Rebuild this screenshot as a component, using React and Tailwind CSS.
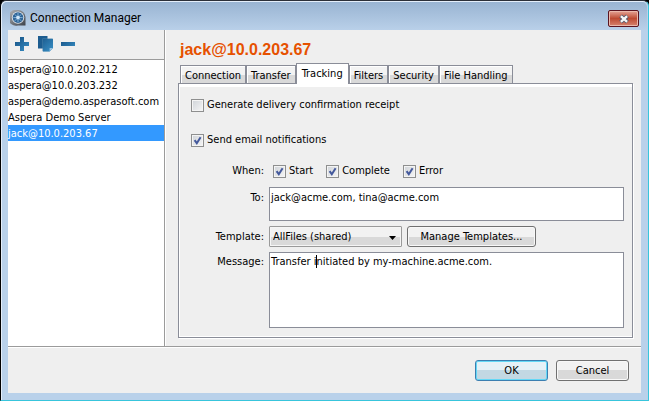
import { useState } from "react";

const connections = [
  "aspera@10.0.202.212",
  "aspera@10.0.203.232",
  "aspera@demo.asperasoft.com",
  "Aspera Demo Server",
  "jack@10.0.203.67",
];

const tabs = ["Connection", "Transfer", "Tracking", "Filters", "Security", "File Handling"];

function Check({ label, defaultChecked }) {
  const [checked, setChecked] = useState(Boolean(defaultChecked));

  return (
    <label className="flex items-center gap-[3px] whitespace-nowrap">
      <span className="grid">
        <input
          type="checkbox"
          checked={checked}
          onChange={(e) => setChecked(e.target.checked)}
          className="col-start-1 row-start-1 size-[13px] appearance-none border border-[#8e8f8f] bg-linear-to-br from-[#cfd3d8] to-[#f6f6f6] shadow-[inset_0_0_0_1px_#f4f4f4]"
        />
        {checked && (
          <svg viewBox="0 0 13 13" className="pointer-events-none col-start-1 row-start-1 size-[13px]">
            <path d="M3.6 6.2 L5.8 9.2 L9.6 3.2" fill="none" stroke="#44599c" strokeWidth="2" />
          </svg>
        )}
      </span>
      {label}
    </label>
  );
}

function AppIcon() {
  return (
    <svg viewBox="0 0 16 16" className="size-4">
      <defs>
        <linearGradient id="rim" x1="0" y1="0" x2="1" y2="1">
          <stop offset="0" stopColor="#b5b8bd" />
          <stop offset="1" stopColor="#3b4048" />
        </linearGradient>
      </defs>
      <path d="M8 0 A8 8 0 1 0 8 15.5 L15.5 15.5 L15.5 7 A7.5 7.5 0 0 0 8 0Z" fill="url(#rim)" />
      <circle cx="8" cy="7.6" r="6.2" fill="#dde3ea" />
      <circle cx="8" cy="7.6" r="5.3" fill="#2d6396" />
      <path d="M8 3v9.2M3.4 7.6h9.2M4.8 4.4l6.4 6.4M11.2 4.4l-6.4 6.4" stroke="#8dbbe0" strokeWidth="0.9" />
      <circle cx="8" cy="7.6" r="1.8" fill="#cfe5f7" />
    </svg>
  );
}

function ToolbarIcons() {
  return (
    <div className="flex h-[30px] shrink-0 items-start gap-[7px] border-b border-[#9b9b9b] bg-[#efefef] pt-[6px] pl-[6px]">
      <svg width="0" height="0" className="absolute">
        <linearGradient id="steel" gradientUnits="userSpaceOnUse" x1="0" y1="0" x2="16" y2="16">
          <stop offset="0.2" stopColor="#1b5a8d" />
          <stop offset="1" stopColor="#3b93c9" />
        </linearGradient>
      </svg>
      <button aria-label="Add">
        <svg viewBox="0 0 16 16" className="size-4">
          <path d="M6 1h4v5h5v4h-5v5H6v-5H1V6h5z" fill="url(#steel)" />
        </svg>
      </button>
      <button aria-label="Duplicate">
        <svg viewBox="0 0 16 16" className="size-4">
          <path d="M1 0h9.5v12.5H1z" fill="#1c5c8f" />
          <path d="M5.5 2.5H15.7v9.5l-3 3.3H5.5z" fill="#4f86ad" />
          <path d="M6 3H16v9L12.6 15.5H6z" fill="url(#steel)" />
          <path d="M16 12h-3.4v3.5z" fill="#9cc5e3" />
        </svg>
      </button>
      <button aria-label="Remove">
        <svg viewBox="0 0 16 16" className="size-4">
          <path d="M1 6h14v4H1z" fill="url(#steel)" />
        </svg>
      </button>
    </div>
  );
}

export default function App() {
  const [selected, setSelected] = useState("jack@10.0.203.67");
  const [tab, setTab] = useState("Tracking");

  return (
    <div className="min-h-screen bg-black font-['DejaVu_Sans_Condensed','DejaVu_Sans',sans-serif] text-[11px] leading-4 text-black">
      <div className="flex min-h-screen flex-col overflow-hidden rounded-t-[6px] border border-t-[#2b2f38] border-r-[#38c5dc] border-b-[#38c5dc] border-l-black bg-[#b9d1ea] px-[7px] pb-[7px] shadow-[inset_1px_1px_0_#e4eefa]">
        {/* Title bar */}
        <header className="-mx-[6px] mt-px flex h-7 shrink-0 items-start justify-between rounded-t-[5px] bg-linear-to-b from-[#99b4d2] to-[#b9d0e9] pr-2 pl-[8px]">
          <h1 className="flex h-8 items-center gap-1 font-[Roboto,sans-serif] text-[12px]">
            <AppIcon />
            Connection Manager
          </h1>
          <button
            aria-label="Close"
            className="mt-2 flex h-[17px] w-[31px] items-center justify-center rounded-[2px] border border-[#5a1420] bg-linear-to-b from-[#e3a496] from-0% via-[#bd4a32] via-50% to-[#d5826e] shadow-[inset_0_0_0_1px_#eab8ab]"
          >
            <svg viewBox="0 0 12 10" className="h-[10px] w-3">
              <path d="M2.6 2 L9.4 8 M9.4 2 L2.6 8" stroke="#53586b" strokeWidth="4.2" />
              <path d="M2.9 2.2 L9.1 7.8 M9.1 2.2 L2.9 7.8" stroke="#f6f6f6" strokeWidth="2.4" />
            </svg>
          </button>
        </header>

        <div className="flex grow flex-col bg-[#efefef]">
          <div className="flex grow border-b border-[#9b9b9b]">
            {/* Connection list */}
            <aside className="flex w-[157px] shrink-0 flex-col border-r border-[#9b9b9b] bg-white">
              <ToolbarIcons />
              <ul className="pt-px">
                {connections.map((name) => (
                  <li key={name}>
                    <button
                      onClick={() => setSelected(name)}
                      className={
                        name === selected
                          ? "block h-4 w-full bg-[#3399ff] pt-[2px] text-left leading-[14px] whitespace-nowrap text-white"
                          : "block h-4 w-full pt-[2px] text-left leading-[14px] whitespace-nowrap"
                      }
                    >
                      {name}
                    </button>
                  </li>
                ))}
              </ul>
            </aside>

            <main className="flex min-w-0 grow flex-col border-l border-white pt-[10px] pr-2 pb-2 pl-3">
              <h2 className="pb-[2px] pl-[2px] font-['Liberation_Sans',sans-serif] text-[16px] leading-[20px] font-bold text-[#e65100]">
                jack@10.0.203.67
              </h2>

              {/* Tabs */}
              <div role="tablist" className="z-10 -mb-px flex h-[22px] items-end pl-[2px]">
                {tabs.map((name) => (
                  <button
                    key={name}
                    role="tab"
                    aria-selected={name === tab}
                    onClick={() => setTab(name)}
                    className={
                      name === tab
                        ? "h-[21px] border border-b-0 border-[#8a8d98] bg-white px-[5px] pb-px whitespace-nowrap"
                        : "h-[19px] border border-[#8a8d98] bg-linear-to-b from-[#f3f3f3] from-50% to-[#d9d9d9] to-50% px-1 pt-[2px] leading-[14px] whitespace-nowrap shadow-[inset_1px_1px_0_#fff]"
                    }
                  >
                    {name}
                  </button>
                ))}
              </div>

              <section className="flex grow flex-col border border-[#8a8d98] pt-[13px] pr-2 pb-[9px] pl-[7px] shadow-[inset_1px_3px_0_#fff,inset_0_-1px_0_#fff,1px_1px_0_#fff]">
                <div className="pl-[5px]">
                  <Check label="Generate delivery confirmation receipt" />
                </div>
                <div className="mt-[19px] pl-[5px]">
                  <Check label="Send email notifications" defaultChecked />
                </div>

                <div className="mt-[14px] grid grow grid-cols-[78px_1fr] grid-rows-[auto_auto_auto_1fr] gap-x-[5px] gap-y-[5px]">
                  <span className="pt-px pb-[3px] text-right">When:</span>
                  <div className="flex gap-[13px] pt-px pb-[3px] pl-1">
                    <Check label="Start" defaultChecked />
                    <Check label="Complete" defaultChecked />
                    <Check label="Error" defaultChecked />
                  </div>

                  <label htmlFor="to" className="pt-[3px] text-right">
                    To:
                  </label>
                  <textarea
                    id="to"
                    defaultValue="jack@acme.com, tina@acme.com"
                    className="block h-[34px] w-full resize-none border border-[#8a8d98] bg-white px-px pt-[2px] outline-none"
                  />

                  <label htmlFor="template" className="pt-[3px] text-right">
                    Template:
                  </label>
                  <div className="flex gap-[5px]">
                    <div className="grid w-[133px] shrink-0">
                      <select
                        id="template"
                        className="col-start-1 row-start-1 h-[21px] w-full appearance-none rounded-[1px] border border-[#9a9a9a] bg-linear-to-b from-[#f2f2f2] from-50% to-[#d9d9d9] to-50% pl-[3px] shadow-[inset_0_0_0_1px_#f5f5f5]"
                      >
                        <option>AllFiles (shared)</option>
                      </select>
                      <svg
                        viewBox="0 0 7 4"
                        className="pointer-events-none col-start-1 row-start-1 mt-[2px] mr-[6px] h-1 w-[7px] self-center justify-self-end"
                      >
                        <path d="M0 0h7L3.5 4z" />
                      </svg>
                    </div>
                    <button className="h-[21px] w-[129px] rounded-[3px] border border-[#707070] bg-linear-to-b from-[#f2f2f2] from-50% to-[#d9d9d9] to-50% whitespace-nowrap shadow-[inset_0_0_0_1px_#f8f8f8]">
                      Manage Templates...
                    </button>
                  </div>

                  <label htmlFor="message" className="pt-[2px] text-right">
                    Message:
                  </label>
                  <div className="relative flex">
                    <textarea
                      id="message"
                      defaultValue="Transfer initiated by my-machine.acme.com."
                      className="block w-full resize-none border border-[#8a8d98] bg-white px-px pt-px outline-none"
                    />
                    {/* Text cursor */}
                    <span className="absolute top-[3px] left-[47px] h-[13px] w-px bg-black" />
                  </div>
                </div>
              </section>
            </main>
          </div>

          {/* Dialog buttons */}
          <footer className="flex shrink-0 gap-2 border-t border-white pt-3 pr-3 pb-3">
            <button className="ml-auto h-[21px] w-[73px] rounded-[3px] border border-[#3c7fb1] bg-linear-to-b from-[#e6f1f7] from-50% to-[#c2d8e3] to-50% shadow-[inset_0_0_0_1px_#64d8f6]">
              OK
            </button>
            <button className="h-[21px] w-[73px] rounded-[3px] border border-[#707070] bg-linear-to-b from-[#f2f2f2] from-50% to-[#d9d9d9] to-50% shadow-[inset_0_0_0_1px_#f8f8f8]">
              Cancel
            </button>
          </footer>
        </div>
      </div>
    </div>
  );
}
